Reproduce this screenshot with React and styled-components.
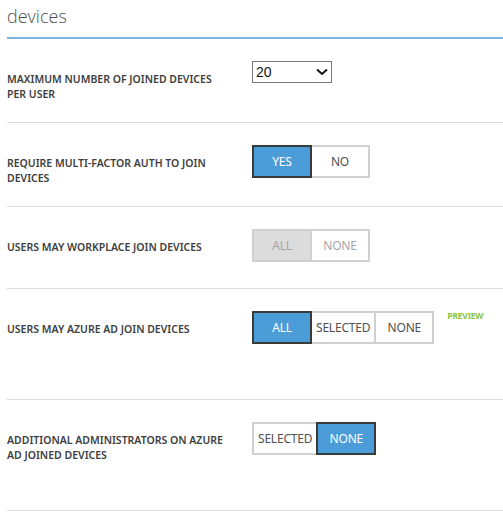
import React from "react";
import styled, { createGlobalStyle } from "styled-components";

const GlobalStyle = createGlobalStyle`
  body {
    margin: 0;
    background: #fff;
    font-family: "Noto Sans", "Open Sans", sans-serif;
  }
`;

const Page = styled.div`
  padding-left: 7px;
  width: 496px;
`;

const Title = styled.h1`
  margin: 0;
  padding-top: 3px;
  height: 34px;
  font-family: "Open Sans", sans-serif;
  font-weight: 300;
  font-size: 18px;
  line-height: 26px;
  color: #505050;
  border-bottom: 2px solid #7fb4e2;
`;

const Row = styled.div`
  display: flex;
  align-items: flex-start;
  padding-top: 22px;
  min-height: ${p => p.h}px;
  border-bottom: 1px solid #dcdcdc;
`;

const Label = styled.div`
  width: 245px;
  padding-top: 11px;
  font-size: 10.5px;
  font-weight: 600;
  line-height: 15px;
  color: #404040;
`;

const Dropdown = styled.div`
  display: flex;
  align-items: center;
  justify-content: space-between;
  box-sizing: border-box;
  width: 80px;
  height: 22px;
  padding: 0 3px 0 3px;
  border: 1px solid #7a7a7a;
  font-family: "Liberation Sans", Arial, sans-serif;
  font-size: 14px;
  color: #111;
`;

const Group = styled.div`
  display: flex;
`;

const Option = styled.div`
  position: relative;
  z-index: ${p => (p.active ? 1 : 0)};
  box-sizing: border-box;
  min-width: 60px;
  height: 33px;
  padding: 0 4px;
  margin-left: ${p => (p.first ? 0 : -2)}px;
  display: flex;
  align-items: center;
  justify-content: center;
  border: 2px solid ${p => (p.active ? (p.disabled ? "#d0d0d0" : "#3a3a3a") : "#d0d0d0")};
  background: ${p => (p.active ? (p.disabled ? "#dcdcdc" : "#4b9cd7") : "#fff")};
  color: ${p => (p.disabled ? "#a6a6a6" : p.active ? "#fff" : "#505050")};
  font-size: 12px;
  letter-spacing: -0.2px;
`;

const Preview = styled.span`
  margin-left: 13px;
  margin-top: -1px;
  font-size: 8.5px;
  font-weight: 700;
  color: #8cc63f;
  letter-spacing: -0.2px;
`;

function Chevron() {
  return (
    <svg width="12" height="8" viewBox="0 0 12 8">
      <path d="M1 1.5 L6 6 L11 1.5" fill="none" stroke="#111" strokeWidth="2" />
    </svg>
  );
}

function Toggle({ options, value, disabled }) {
  return (
    <Group>
      {options.map((o, i) => (
        <Option key={o} first={i === 0} active={o === value} disabled={disabled}>
          {o}
        </Option>
      ))}
    </Group>
  );
}

export default function App() {
  return (
    <Page>
      <GlobalStyle />
      <Title>devices</Title>
      <Row h={61}>
        <Label>
          MAXIMUM NUMBER OF JOINED DEVICES
          <br />
          PER USER
        </Label>
        <Dropdown>
          <span>20</span>
          <Chevron />
        </Dropdown>
      </Row>
      <Row h={61}>
        <Label>
          REQUIRE MULTI-FACTOR AUTH TO JOIN
          <br />
          DEVICES
        </Label>
        <Toggle options={["YES", "NO"]} value="YES" />
      </Row>
      <Row h={59}>
        <Label>USERS MAY WORKPLACE JOIN DEVICES</Label>
        <Toggle options={["ALL", "NONE"]} value="ALL" disabled />
      </Row>
      <Row h={88}>
        <Label>USERS MAY AZURE AD JOIN DEVICES</Label>
        <Toggle options={["ALL", "SELECTED", "NONE"]} value="ALL" />
        <Preview>PREVIEW</Preview>
      </Row>
      <Row h={88}>
        <Label>
          ADDITIONAL ADMINISTRATORS ON AZURE
          <br />
          AD JOINED DEVICES
        </Label>
        <Toggle options={["SELECTED", "NONE"]} value="NONE" />
      </Row>
    </Page>
  );
}
